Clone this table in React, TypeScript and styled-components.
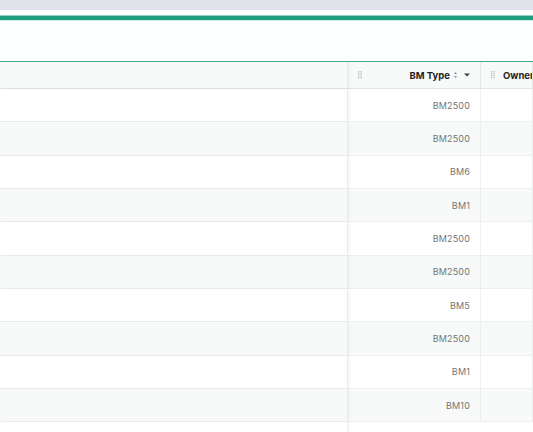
import React from "react";
import styled, { createGlobalStyle } from "styled-components";

const Global = createGlobalStyle`
  html, body { margin: 0; padding: 0; background: #ffffff; }
  body { font-family: Inter, "Liberation Sans", Arial, sans-serif; overflow: hidden; }
`;

const Page = styled.div`
  width: 533px;
  height: 432px;
  display: flex;
  flex-direction: column;
  overflow: hidden;
`;

const TopBar = styled.div`
  height: 10px;
  background: #e1e3ea;
  flex: none;
`;

const AccentStrip = styled.div`
  margin-top: 5px;
  height: 4px;
  background: #1f9e7f;
  border-top: 1px solid #8fd3c0;
  border-bottom: 1px solid #cfeee5;
  flex: none;
`;

const Toolbar = styled.div`
  height: 40px;
  background: #fdfefe;
  flex: none;
`;

const Grid = styled.div`
  border-top: 1px solid #4aa592;
  display: flex;
  flex-direction: column;
  width: 533px;
  flex: 1;
  overflow: hidden;
  background: linear-gradient(to right, transparent 347px, #eef0ef 347px, #eef0ef 348px, rgba(0,0,0,0.03) 348px, transparent 352px);
`;

const Row = styled.div<{ $alt?: boolean; $header?: boolean }>`
  display: grid;
  grid-template-columns: 348px 133px 1fr;
  height: ${(p) => (p.$header ? "26px" : "32.33px")};
  background: ${(p) => (p.$alt || p.$header ? "#f7faf9" : "#ffffff")};
  border-bottom: 1px solid ${(p) => (p.$header ? "#e3e5e4" : "#eef0ef")};
  flex: none;
`;

const PinnedCell = styled.div`
  border-right: 1px solid #e8eae9;
  box-shadow: 2px 0 3px rgba(0, 0, 0, 0.035);
  position: relative;
  z-index: 1;
`;

const Cell = styled.div<{ $align?: "left" | "right" }>`
  display: flex;
  align-items: center;
  justify-content: ${(p) => (p.$align === "right" ? "flex-end" : "flex-start")};
  padding: 0 10px;
  font-size: 9px;
  letter-spacing: 0.15px;
  color: #727675;
  border-right: 1px solid #eef0ef;
  white-space: nowrap;
  overflow: hidden;
`;

const HeaderCell = styled.div`
  display: flex;
  align-items: center;
  padding: 0 0 0 10px;
  border-right: 1px solid #e6e8e7;
  font-size: 9.5px;
  font-weight: 700;
  color: #1f2322;
  white-space: nowrap;
  overflow: hidden;
  gap: 4px;
`;

const Label = styled.span<{ $grow?: boolean }>`
  flex: ${(p) => (p.$grow ? "1" : "none")};
  text-align: right;
`;

const IconBox = styled.span<{ $ml?: number }>`
  display: inline-flex;
  align-items: center;
  color: #6a6f6d;
  margin-left: ${(p) => p.$ml ?? 0}px;
`;

const RightPad = styled.span`
  width: 6px;
  flex: none;
`;

const Handle = () => (
  <IconBox>
    <svg width="4" height="8" viewBox="0 0 4 8">
      {[0, 2, 4, 6].map((y) =>
        [0, 2.4].map((x) => (
          <rect key={`${x}-${y}`} x={x} y={y} width="1.4" height="1.4" fill="#bfc3c1" />
        ))
      )}
    </svg>
  </IconBox>
);

const SortIcon = () => (
  <IconBox>
    <svg width="3" height="6" viewBox="0 0 3 6">
      <path d="M1.5 0 L3 2 H0 Z" fill="#8a8f8d" />
      <path d="M1.5 6 L3 4 H0 Z" fill="#8a8f8d" />
    </svg>
  </IconBox>
);

const Caret = () => (
  <IconBox $ml={3}>
    <svg width="6" height="4" viewBox="0 0 6 4">
      <path d="M0 0.5 H6 L3 3.5 Z" fill="#3c403e" />
    </svg>
  </IconBox>
);

const data = ["BM2500", "BM2500", "BM6", "BM1", "BM2500", "BM2500", "BM5", "BM2500", "BM1", "BM10"];

export default function App() {
  return (
    <Page>
      <Global />
      <TopBar />
      <AccentStrip />
      <Toolbar />
      <Grid>
        <Row $header>
          <PinnedCell />
          <HeaderCell>
            <Handle />
            <Label $grow>BM Type</Label>
            <SortIcon />
            <Caret />
            <RightPad />
          </HeaderCell>
          <HeaderCell>
            <Handle />
            <Label style={{ marginLeft: 4 }}>Owner</Label>
          </HeaderCell>
        </Row>
        {data.map((v, i) => (
          <Row key={i} $alt={i % 2 === 1}>
            <PinnedCell />
            <Cell $align="right">{v}</Cell>
            <Cell />
          </Row>
        ))}
      </Grid>
    </Page>
  );
}
